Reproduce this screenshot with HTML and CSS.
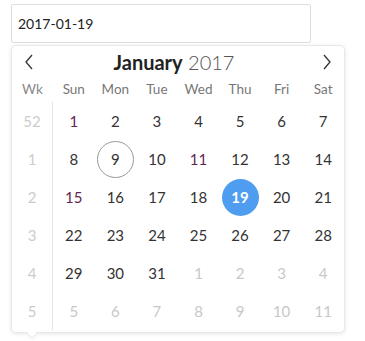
FILE: index.html
```html
<html>
    <head>
        <meta charset="utf-8" />
        <title>datepicker</title>
        <link rel="stylesheet" href="styles.css">
    </head>
    <body>
        <div class="picker">
            <div class="field">2017-01-19</div>
            <div class="popup">
                <div class="head">
                    <span class="nav">
                        <svg width="10" height="16" viewBox="0 0 10 16"><path d="M8 1 L2 8 L8 15" fill="none" stroke="#333" stroke-width="1.3"/></svg>
                    </span>
                    <span class="title"><b>January</b> 2017</span>
                    <span class="nav">
                        <svg width="10" height="16" viewBox="0 0 10 16"><path d="M2 1 L8 8 L2 15" fill="none" stroke="#333" stroke-width="1.3"/></svg>
                    </span>
                </div>
                <div class="grid names">
                    <span class="wk">Wk</span>
                    <span>Sun</span><span>Mon</span><span>Tue</span><span>Wed</span><span>Thu</span><span>Fri</span><span>Sat</span>
                </div>
                <div class="grid days">
                    <span class="wk">52</span>
                    <span class="holiday">1</span><span>2</span><span>3</span><span>4</span><span>5</span><span>6</span><span>7</span>

                    <span class="wk">1</span>
                    <span>8</span><span><i class="today">9</i></span><span>10</span><span class="holiday">11</span><span>12</span><span>13</span><span>14</span>

                    <span class="wk">2</span>
                    <span class="holiday">15</span><span>16</span><span>17</span><span>18</span><span><i class="selected">19</i></span><span>20</span><span>21</span>

                    <span class="wk">3</span>
                    <span>22</span><span>23</span><span>24</span><span>25</span><span>26</span><span>27</span><span>28</span>

                    <span class="wk">4</span>
                    <span>29</span><span>30</span><span>31</span><span class="other">1</span><span class="other">2</span><span class="other">3</span><span class="other">4</span>

                    <span class="wk">5</span>
                    <span class="other">5</span><span class="other">6</span><span class="other">7</span><span class="other">8</span><span class="other">9</span><span class="other">10</span><span class="other">11</span>
                </div>
                <div class="tip"></div>
            </div>
        </div>
    </body>
</html>
```

FILE: styles.css
```css
body {
    margin: 0;
    padding: 4px 0 0 11px;
    font-family: Lato, "Noto Sans", sans-serif;
    color: #333;
    background: #fff;
}

.field {
    width: 286px;
    height: 37px;
    line-height: 37px;
    padding: 0 6px;
    border: 1px solid #ddd;
    border-radius: 2px;
    font-size: 14px;
    color: #222;
}

.popup {
    position: relative;
    margin-top: 2px;
    width: 332px;
    border: 1px solid #e8e8e8;
    border-radius: 5px;
    box-shadow: 0 1px 4px rgba(0,0,0,0.1);
    background: #fff;
    padding-bottom: 2px;
}

.head {
    display: flex;
    align-items: center;
    justify-content: space-between;
    height: 32px;
    padding: 0 12px;
}

.nav {
    display: flex;
    width: 10px;
}

.title {
    font-size: 20px;
    color: #555;
    font-weight: 300;
    padding-right: 8px;
}

.title b {
    font-weight: 700;
    color: #222;
}

.grid {
    display: grid;
    grid-template-columns: 41px repeat(7, 1fr);
}

.grid span {
    display: flex;
    align-items: center;
    justify-content: center;
}

.names {
    height: 22px;
    font-size: 13.5px;
    color: #777;
}

.names .wk {
    color: #888;
}

.days {
    grid-auto-rows: 38px;
    font-size: 15px;
    margin-top: 2px;
}

.days .wk {
    border-right: 1px solid #e5e5e5;
    color: #ccc;
}

.holiday {
    color: #642650;
}

.other {
    color: #c8c8c8;
}

.days i {
    font-style: normal;
    display: flex;
    align-items: center;
    justify-content: center;
    width: 37px;
    height: 37px;
    border-radius: 50%;
    box-sizing: border-box;
}

.today {
    border: 1px solid #999;
}

.selected {
    background: #4f9df0;
    color: #fff;
    font-weight: 700;
}

.tip {
    position: absolute;
    left: 17px;
    bottom: -4px;
    width: 6px;
    height: 6px;
    background: #fff;
    transform: rotate(45deg);
    box-shadow: 2px 2px 2px rgba(0,0,0,0.06);
}
```
